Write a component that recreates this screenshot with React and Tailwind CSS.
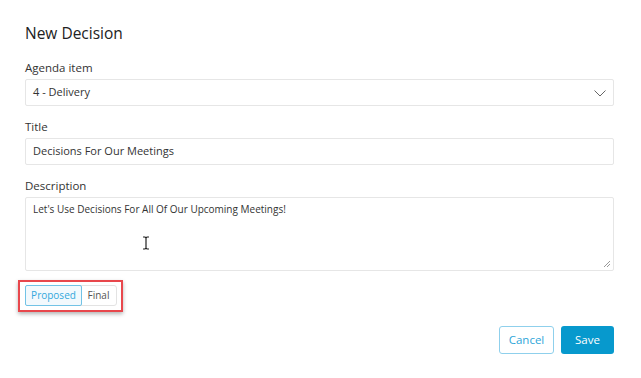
import React, { useState } from 'react';

const App = () => {
  const [status, setStatus] = useState('Proposed');

  return (
    <div className="min-h-screen bg-white text-[#333] font-['Open_Sans',sans-serif] pl-[25px] pr-[27px] pt-[22px]">
      <h1 className="text-[15.5px] leading-[22px] font-normal text-[#222] mb-[15px]">New Decision</h1>

      {/* Agenda item */}
      <label className="block text-[11.5px] leading-[18px] mb-[2px]">Agenda item</label>
      <div className="relative h-[27px] border border-[#e6e6e6] rounded-[2px] flex items-center pl-[7px] text-[11px]">
        <span>4 - Delivery</span>
        <svg className="absolute right-[7px] top-[10px]" width="12" height="7" viewBox="0 0 12 7" fill="none">
          <path d="M0.5 0.5L6 6L11.5 0.5" stroke="#666" strokeWidth="1" />
        </svg>
      </div>

      {/* Title */}
      <label className="block text-[11.5px] leading-[18px] mt-[12px] mb-[2px]">Title</label>
      <div className="h-[27px] border border-[#e6e6e6] rounded-[2px] flex items-center pl-[7px] text-[11px]">
        Decisions For Our Meetings
      </div>

      {/* Description */}
      <label className="block text-[11.5px] leading-[18px] mt-[12px] mb-[2px]">Description</label>
      <div className="relative h-[74px] border border-[#e6e6e6] rounded-[2px] pl-[7px] pt-[3px] text-[10px] leading-[16px]">
        Let's Use Decisions For All Of Our Upcoming Meetings!
        <svg className="absolute left-[116px] top-[38px]" width="8" height="14" viewBox="0 0 8 14" fill="none">
          <path d="M1 1H3L4 2L5 1H7M4 2V12M1 13H3L4 12L5 13H7" stroke="#222" strokeWidth="1.2" />
        </svg>
        <svg className="absolute right-[2px] bottom-[2px]" width="8" height="8" viewBox="0 0 8 8">
          <path d="M7 1L1 7M7 4L4 7" stroke="#999" strokeWidth="1" />
        </svg>
      </div>

      {/* Status toggle */}
      <div className="mt-[9px] -ml-[7px] w-[105px] h-[32px] border-2 border-[#e8474c] shadow-[0_2px_4px_rgba(0,0,0,0.3)] pl-[5px] pt-[3px]">
        <div className="flex w-[92px] h-[21px] border border-[#e3e3e3] rounded-[3px] text-[10px]">
          <button
            onClick={() => setStatus('Proposed')}
            className={`w-[57px] rounded-[2px] ${status === 'Proposed' ? 'border border-[#72c3e6] bg-[#f2f9fd] text-[#33a8dc] -m-px' : 'text-[#555]'}`}
          >
            Proposed
          </button>
          <button
            onClick={() => setStatus('Final')}
            className={`flex-1 rounded-[2px] ${status === 'Final' ? 'border border-[#72c3e6] bg-[#f2f9fd] text-[#33a8dc] -m-px' : 'text-[#555]'}`}
          >
            Final
          </button>
        </div>
      </div>

      {/* Actions */}
      <div className="flex justify-end gap-[7px] mt-[14px]">
        <button className="w-[55px] h-[28px] border border-[#8fd0ec] rounded-[3px] text-[11.5px] text-[#2ea6d9] bg-white">
          Cancel
        </button>
        <button className="w-[53px] h-[28px] rounded-[3px] text-[11.5px] text-white bg-[#0799cd]">
          Save
        </button>
      </div>
    </div>
  );
};

export default App;
